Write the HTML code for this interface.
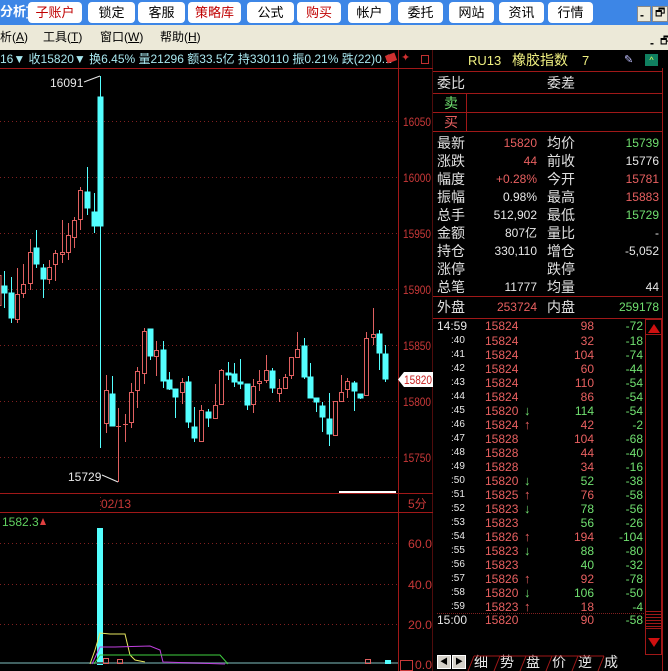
<!DOCTYPE html>
<html><head><meta charset="utf-8"><style>
*{margin:0;padding:0;box-sizing:border-box}
body{width:668px;height:671px;overflow:hidden;background:#000;position:relative;font-family:"Liberation Sans","Noto Sans CJK SC",sans-serif;font-size:12px}
.a{position:absolute;white-space:nowrap;line-height:1}
#top{position:absolute;left:0;top:0;width:668px;height:25px;background:#3d86e6}
.btn{position:absolute;top:2px;height:21px;background:#fff;border-radius:4px;font-size:13px;line-height:21px;text-align:center;color:#000}
.btn.r{color:#c00000}
#menu{position:absolute;left:0;top:25px;width:668px;height:25px;background:#ece9d8;font-size:12px}
.L{color:#e0e0e0;font-size:14px}
.R{color:#e86060}
.G{color:#70e070}
.W{color:#e8e8e8}
.hl{position:absolute;height:1px;background:#a01818}
.vl{position:absolute;width:1px;background:#a01818}
</style></head><body>
<div id="top">
<div class="a" style="left:0;top:5px;color:#fff;font-size:13px;font-weight:bold">分析]</div>
<div class="btn r" style="left:28px;width:54px">子账户</div>
<div class="btn" style="left:88px;width:47px">锁定</div>
<div class="btn" style="left:138px;width:47px">客服</div>
<div class="btn r" style="left:188px;width:53px">策略库</div>
<div class="btn" style="left:247px;width:47px">公式</div>
<div class="btn r" style="left:297px;width:44px">购买</div>
<div class="btn" style="left:348px;width:43px">帐户</div>
<div class="btn" style="left:398px;width:45px">委托</div>
<div class="btn" style="left:449px;width:45px">网站</div>
<div class="btn" style="left:499px;width:45px">资讯</div>
<div class="btn" style="left:548px;width:45px">行情</div>
<div style="position:absolute;left:637px;top:6px;width:14px;height:16px;background:#ece9d8;border:1px solid #888"></div>
<div style="position:absolute;left:652px;top:6px;width:16px;height:16px;background:#ece9d8;border:1px solid #888"></div>
<div class="a" style="left:640px;top:9px;font-weight:bold">-</div>
<div class="a" style="left:655px;top:8px;font-size:11px">🗗</div>
</div>
<div id="menu">
<div class="a" style="left:0;top:6px">析(<u>A</u>)</div>
<div class="a" style="left:43px;top:6px">工具(<u>T</u>)</div>
<div class="a" style="left:100px;top:6px">窗口(<u>W</u>)</div>
<div class="a" style="left:160px;top:6px">帮助(<u>H</u>)</div>
<div class="a" style="left:650px;top:12px;font-weight:bold">-</div>
<div class="a" style="left:660px;top:11px;font-size:11px">🗗</div>
</div>
<div class="a" style="left:0;top:53px;color:#a8e8f0;font-size:12px">16▼ 收15820▼ 换6.45% 量21296 额33.5亿 持330110 振0.21% 跌(22)0.1</div>
<div style="position:absolute;left:386px;top:54px;width:10px;height:8px;background:#d03030;transform:rotate(-20deg)"></div>
<div class="a" style="left:401px;top:53px;color:#d03030;font-size:11px">✦</div>
<div style="position:absolute;left:421px;top:55px;width:8px;height:9px;border:1px solid #c03030"></div>

<svg style="position:absolute;left:0;top:0" width="433" height="671">
<g stroke="#a01818" stroke-width="1">
<line x1="398.5" y1="50" x2="398.5" y2="671"/>
<line x1="433" y1="50" x2="433" y2="671"/>
<line x1="0" y1="68.5" x2="433" y2="68.5"/>
<line x1="0" y1="493.5" x2="433" y2="493.5"/>
<line x1="0" y1="512.5" x2="433" y2="512.5"/>
</g>
<g stroke="#802020" stroke-dasharray="1,3">
<line x1="0" y1="121.5" x2="398" y2="121.5"/><line x1="0" y1="177.5" x2="398" y2="177.5"/>
<line x1="0" y1="233.5" x2="398" y2="233.5"/><line x1="0" y1="289.5" x2="398" y2="289.5"/>
<line x1="0" y1="345.5" x2="398" y2="345.5"/><line x1="0" y1="401.5" x2="398" y2="401.5"/>
<line x1="0" y1="457.5" x2="398" y2="457.5"/>
<line x1="0" y1="543.5" x2="398" y2="543.5"/><line x1="0" y1="584.5" x2="398" y2="584.5"/>
<line x1="0" y1="624.5" x2="398" y2="624.5"/>
<line x1="100.5" y1="493" x2="100.5" y2="512"/>
</g>
<g fill="#c83838" font-size="12" font-family="Liberation Sans" lengthAdjust="spacingAndGlyphs">
<text x="403" y="126" textLength="28" lengthAdjust="spacingAndGlyphs">16050</text><text x="403" y="182" textLength="28" lengthAdjust="spacingAndGlyphs">16000</text><text x="403" y="238" textLength="28" lengthAdjust="spacingAndGlyphs">15950</text>
<text x="403" y="294" textLength="28" lengthAdjust="spacingAndGlyphs">15900</text><text x="403" y="350" textLength="28" lengthAdjust="spacingAndGlyphs">15850</text><text x="403" y="406" textLength="28" lengthAdjust="spacingAndGlyphs">15800</text>
<text x="403" y="462" textLength="28" lengthAdjust="spacingAndGlyphs">15750</text>
<text x="408" y="508">5分</text>
<text x="408" y="548" textLength="24" lengthAdjust="spacingAndGlyphs">60.0</text><text x="408" y="589" textLength="24" lengthAdjust="spacingAndGlyphs">40.0</text><text x="408" y="629" textLength="24" lengthAdjust="spacingAndGlyphs">20.0</text>
<text x="415" y="669" textLength="17" lengthAdjust="spacingAndGlyphs">0.0</text>
<text x="101" y="508">02/13</text>
</g>
<rect x="400.5" y="660.5" width="12" height="10" fill="none" stroke="#c83838"/>
<path d="M398 379.5 L404 372 H433 V387 H404 Z" fill="#fff"/>
<text x="404" y="384" fill="#c82020" font-size="12" font-family="Liberation Sans" textLength="28" lengthAdjust="spacingAndGlyphs">15820</text>
<rect x="339" y="491" width="57" height="2" fill="#fff"/>
<g font-size="12" font-family="Liberation Sans" fill="#e8e8e8">
<text x="50" y="87">16091</text><text x="68" y="481">15729</text>
</g>
<g stroke="#e8e8e8"><line x1="84" y1="82" x2="100" y2="76"/><line x1="102" y1="475" x2="118" y2="482"/></g>
<text x="2" y="526" fill="#60d060" font-size="12" font-family="Liberation Sans">1582.3</text>
<path d="M40 525 L43 518 L46 525 Z" fill="#e04040"/>
<g stroke="#54ffff" fill="#54ffff">
<line x1="4.5" y1="271" x2="4.5" y2="308"/><rect x="2" y="286" width="5" height="7"/>
<line x1="11.5" y1="277" x2="11.5" y2="323"/><rect x="9" y="293" width="5" height="25"/>
<line x1="36.5" y1="230" x2="36.5" y2="268"/><rect x="34" y="248" width="5" height="16"/>
<line x1="43.5" y1="264" x2="43.5" y2="298"/><rect x="41" y="268" width="5" height="11"/>
<line x1="87.5" y1="167" x2="87.5" y2="215"/><rect x="85" y="192" width="5" height="16"/>
<line x1="94.5" y1="193" x2="94.5" y2="233"/><rect x="92" y="212" width="5" height="14"/>
<line x1="100.5" y1="76" x2="100.5" y2="448"/><rect x="98" y="97" width="5" height="129"/>
<line x1="112.5" y1="376" x2="112.5" y2="426"/><rect x="110" y="394" width="5" height="32"/>
<line x1="150.5" y1="329" x2="150.5" y2="360"/><rect x="148" y="329" width="5" height="27"/>
<line x1="163.5" y1="341" x2="163.5" y2="388"/><rect x="161" y="350" width="5" height="31"/>
<line x1="169.5" y1="372" x2="169.5" y2="390"/><rect x="167" y="380" width="5" height="9"/>
<line x1="175.5" y1="389" x2="175.5" y2="418"/><rect x="173" y="389" width="5" height="8"/>
<line x1="188.5" y1="376" x2="188.5" y2="428"/><rect x="186" y="382" width="5" height="40"/>
<line x1="194.5" y1="407" x2="194.5" y2="442"/><rect x="192" y="427" width="5" height="11"/>
<line x1="208.5" y1="409" x2="208.5" y2="427"/><rect x="206" y="412" width="5" height="6"/>
<line x1="228.5" y1="362" x2="228.5" y2="380"/><rect x="226" y="373" width="5" height="2"/>
<line x1="234.5" y1="363" x2="234.5" y2="387"/><rect x="232" y="374" width="5" height="8"/>
<line x1="240.5" y1="359" x2="240.5" y2="389"/><rect x="238" y="382" width="5" height="2"/>
<line x1="247.5" y1="384" x2="247.5" y2="410"/><rect x="245" y="384" width="5" height="21"/>
<line x1="272.5" y1="368" x2="272.5" y2="393"/><rect x="270" y="371" width="5" height="17"/>
<line x1="304.5" y1="338" x2="304.5" y2="379"/><rect x="302" y="346" width="5" height="31"/>
<line x1="310.5" y1="363" x2="310.5" y2="398"/><rect x="308" y="377" width="5" height="21"/>
<line x1="316.5" y1="398" x2="316.5" y2="412"/><rect x="314" y="398" width="5" height="4"/>
<line x1="322.5" y1="402" x2="322.5" y2="432"/><rect x="320" y="406" width="5" height="11"/>
<line x1="329.5" y1="393" x2="329.5" y2="446"/><rect x="327" y="419" width="5" height="15"/>
<line x1="354.5" y1="381" x2="354.5" y2="411"/><rect x="352" y="383" width="5" height="8"/>
<line x1="360.5" y1="394" x2="360.5" y2="399"/><rect x="358" y="394" width="5" height="4"/>
<line x1="379.5" y1="330" x2="379.5" y2="370"/><rect x="377" y="334" width="5" height="19"/>
<line x1="385.5" y1="345" x2="385.5" y2="382"/><rect x="383" y="354" width="5" height="25"/>
</g>
<g stroke="#e06060" fill="#000">
<line x1="17.5" y1="268" x2="17.5" y2="323"/><rect x="15.5" y="294.5" width="4" height="25"/>
<line x1="23.5" y1="264" x2="23.5" y2="298"/><rect x="21.5" y="284.5" width="4" height="9"/>
<line x1="30.5" y1="239" x2="30.5" y2="290"/><rect x="28.5" y="252.5" width="4" height="31"/>
<line x1="49.5" y1="260" x2="49.5" y2="284"/><rect x="47.5" y="267.5" width="4" height="12"/>
<line x1="55.5" y1="250" x2="55.5" y2="281"/><rect x="53.5" y="253.5" width="4" height="11"/>
<line x1="62.5" y1="220" x2="62.5" y2="263"/><rect x="60.5" y="252.5" width="4" height="2"/>
<line x1="68.5" y1="223" x2="68.5" y2="260"/><rect x="66.5" y="235.5" width="4" height="17"/>
<line x1="74.5" y1="217" x2="74.5" y2="248"/><rect x="72.5" y="220.5" width="4" height="17"/>
<line x1="80.5" y1="187" x2="80.5" y2="230"/><rect x="78.5" y="190.5" width="4" height="29"/>
<line x1="106.5" y1="375" x2="106.5" y2="433"/><rect x="104.5" y="390.5" width="4" height="33"/>
<line x1="118.5" y1="408" x2="118.5" y2="482"/><line x1="116" y1="426.5" x2="121" y2="426.5"/>
<line x1="125.5" y1="414" x2="125.5" y2="442"/><line x1="123" y1="424.5" x2="128" y2="424.5"/>
<line x1="131.5" y1="383" x2="131.5" y2="428"/><rect x="129.5" y="392.5" width="4" height="30"/>
<line x1="137.5" y1="367" x2="137.5" y2="408"/><rect x="135.5" y="371.5" width="4" height="19"/>
<line x1="144.5" y1="328" x2="144.5" y2="384"/><rect x="142.5" y="331.5" width="4" height="42"/>
<line x1="156.5" y1="341" x2="156.5" y2="376"/><rect x="154.5" y="350.5" width="4" height="6"/>
<line x1="182.5" y1="378" x2="182.5" y2="404"/><rect x="180.5" y="382.5" width="4" height="10"/>
<line x1="201.5" y1="405" x2="201.5" y2="441"/><rect x="199.5" y="410.5" width="4" height="31"/>
<line x1="215.5" y1="384" x2="215.5" y2="418"/><rect x="213.5" y="405.5" width="4" height="13"/>
<line x1="221.5" y1="369" x2="221.5" y2="404"/><rect x="219.5" y="370.5" width="4" height="34"/>
<line x1="253.5" y1="379" x2="253.5" y2="413"/><rect x="251.5" y="386.5" width="4" height="18"/>
<line x1="259.5" y1="370" x2="259.5" y2="391"/><rect x="257.5" y="381.5" width="4" height="2"/>
<line x1="266.5" y1="355" x2="266.5" y2="383"/><rect x="264.5" y="370.5" width="4" height="10"/>
<line x1="279.5" y1="379" x2="279.5" y2="402"/><rect x="277.5" y="388.5" width="4" height="5"/>
<line x1="285.5" y1="374" x2="285.5" y2="388"/><rect x="283.5" y="377.5" width="4" height="11"/>
<line x1="291.5" y1="357" x2="291.5" y2="379"/><rect x="289.5" y="357.5" width="4" height="18"/>
<line x1="297.5" y1="332" x2="297.5" y2="357"/><rect x="295.5" y="349.5" width="4" height="8"/>
<line x1="335.5" y1="401" x2="335.5" y2="435"/><rect x="333.5" y="401.5" width="4" height="34"/>
<line x1="341.5" y1="375" x2="341.5" y2="402"/><rect x="339.5" y="392.5" width="4" height="9"/>
<line x1="347.5" y1="378" x2="347.5" y2="398"/><rect x="345.5" y="381.5" width="4" height="8"/>
<line x1="366.5" y1="332" x2="366.5" y2="396"/><rect x="364.5" y="338.5" width="4" height="57"/>
<line x1="373.5" y1="308" x2="373.5" y2="345"/><rect x="371.5" y="334.5" width="4" height="3"/>
<rect x="-2" y="275.5" width="3" height="30"/>
</g>
<rect x="97" y="528" width="6" height="137" fill="#54ffff"/>
<rect x="0" y="662" width="398" height="2" fill="#406060"/>
<g fill="none" stroke-width="1">
<polyline stroke="#e8e860" points="90,664 95,650 100,633 110,634 125,634 130,655 135,660 145,662"/>
<polyline stroke="#c040e0" points="92,664 100,647 115,647 150,646 160,650 163,662 225,664"/>
<polyline stroke="#40d040" points="94,664 100,655 220,655 228,664"/>
</g>
<g fill="none" stroke="#e06060"><rect x="103.5" y="658.5" width="5" height="5"/><rect x="117.5" y="659.5" width="5" height="4"/><rect x="365.5" y="659.5" width="5" height="4"/></g>
<rect x="385" y="660" width="6" height="4" fill="#54ffff"/>
</svg>

<div class="vl" style="left:662px;top:68px;height:603px"></div>
<div class="a" style="left:468px;top:54px;color:#f0f080;font-size:13px">RU13</div>
<div class="a" style="left:512px;top:53px;color:#f0f080;font-size:14px">橡胶指数</div>
<div class="a" style="left:582px;top:54px;color:#f0f080;font-size:13px">7</div>
<div class="a" style="left:624px;top:55px;color:#c0c0ff;font-size:11px">✎</div>
<div style="position:absolute;left:645px;top:54px;width:13px;height:12px;background:#108060;color:#e0ff60;font-size:9px;text-align:center;line-height:12px">^</div>
<div class="hl" style="left:433px;top:71px;width:230px"></div>
<div class="hl" style="left:433px;top:93px;width:230px"></div>
<div class="hl" style="left:433px;top:112px;width:230px"></div>
<div class="hl" style="left:433px;top:131px;width:230px"></div>
<div class="vl" style="left:466px;top:93px;height:38px"></div>
<div class="hl" style="left:433px;top:296px;width:230px"></div>
<div class="hl" style="left:433px;top:318px;width:230px"></div>
<div class="a L" style="left:437px;top:76px">委比</div>
<div class="a L" style="left:547px;top:76px">委差</div>
<div class="a G" style="left:444px;top:96px;font-size:14px">卖</div>
<div class="a R" style="left:444px;top:115px;font-size:14px">买</div>

<div class="a L" style="left:437px;top:136px">最新</div><div class="a R" style="right:131px;top:137px">15820</div><div class="a L" style="left:547px;top:136px">均价</div><div class="a G" style="right:9px;top:137px">15739</div>
<div class="a L" style="left:437px;top:154px">涨跌</div><div class="a R" style="right:131px;top:155px">44</div><div class="a L" style="left:547px;top:154px">前收</div><div class="a W" style="right:9px;top:155px">15776</div>
<div class="a L" style="left:437px;top:172px">幅度</div><div class="a R" style="right:131px;top:173px">+0.28%</div><div class="a L" style="left:547px;top:172px">今开</div><div class="a R" style="right:9px;top:173px">15781</div>
<div class="a L" style="left:437px;top:190px">振幅</div><div class="a W" style="right:131px;top:191px">0.98%</div><div class="a L" style="left:547px;top:190px">最高</div><div class="a R" style="right:9px;top:191px">15883</div>
<div class="a L" style="left:437px;top:208px">总手</div><div class="a W" style="right:131px;top:209px">512,902</div><div class="a L" style="left:547px;top:208px">最低</div><div class="a G" style="right:9px;top:209px">15729</div>
<div class="a L" style="left:437px;top:226px">金额</div><div class="a W" style="right:131px;top:227px">807亿</div><div class="a L" style="left:547px;top:226px">量比</div><div class="a W" style="right:9px;top:227px">-</div>
<div class="a L" style="left:437px;top:244px">持仓</div><div class="a W" style="right:131px;top:245px">330,110</div><div class="a L" style="left:547px;top:244px">增仓</div><div class="a W" style="right:9px;top:245px">-5,052</div>
<div class="a L" style="left:437px;top:262px">涨停</div><div class="a L" style="left:547px;top:262px">跌停</div>
<div class="a L" style="left:437px;top:280px">总笔</div><div class="a W" style="right:131px;top:281px">11777</div><div class="a L" style="left:547px;top:280px">均量</div><div class="a W" style="right:9px;top:281px">44</div>
<div class="a L" style="left:437px;top:300px">外盘</div><div class="a R" style="right:131px;top:301px">253724</div><div class="a L" style="left:547px;top:300px">内盘</div><div class="a G" style="right:9px;top:301px">259178</div>

<div id="ticks" style="position:absolute;left:433px;top:320px;width:212px;height:300px;font-size:12px">
<div class="a W" style="left:4px;top:0">14:59</div><div class="a R" style="left:52px;top:0">15824</div><div class="a R" style="right:51px;top:0">98</div><div class="a G" style="right:2px;top:0">-72</div>
</div>
<div style="position:absolute;left:437px;top:613px;width:207px;border-top:1px dotted #802020"></div>
<div class="a W" style="left:437px;top:614px">15:00</div><div class="a R" style="left:485px;top:614px">15820</div><div class="a R" style="left:560px;top:614px;width:34px;text-align:right">90</div><div class="a G" style="left:610px;top:614px;width:33px;text-align:right">-58</div>

<div style="position:absolute;left:433px;top:334px;width:212px;font-size:11px;line-height:14px">
<div style="position:relative;height:14px"><span class="a W" style="left:18px;top:2px;font-size:10px">:40</span><span class="a R" style="left:52px;top:1px;font-size:12px">15824</span><span class="a R" style="left:127px;top:1px;width:34px;text-align:right;font-size:12px">32</span><span class="a G" style="left:177px;top:1px;width:33px;text-align:right;font-size:12px">-18</span></div>
<div style="position:relative;height:14px"><span class="a W" style="left:18px;top:2px;font-size:10px">:41</span><span class="a R" style="left:52px;top:1px;font-size:12px">15824</span><span class="a R" style="left:127px;top:1px;width:34px;text-align:right;font-size:12px">104</span><span class="a G" style="left:177px;top:1px;width:33px;text-align:right;font-size:12px">-74</span></div>
<div style="position:relative;height:14px"><span class="a W" style="left:18px;top:2px;font-size:10px">:42</span><span class="a R" style="left:52px;top:1px;font-size:12px">15824</span><span class="a R" style="left:127px;top:1px;width:34px;text-align:right;font-size:12px">60</span><span class="a G" style="left:177px;top:1px;width:33px;text-align:right;font-size:12px">-44</span></div>
<div style="position:relative;height:14px"><span class="a W" style="left:18px;top:2px;font-size:10px">:43</span><span class="a R" style="left:52px;top:1px;font-size:12px">15824</span><span class="a R" style="left:127px;top:1px;width:34px;text-align:right;font-size:12px">110</span><span class="a G" style="left:177px;top:1px;width:33px;text-align:right;font-size:12px">-54</span></div>
<div style="position:relative;height:14px"><span class="a W" style="left:18px;top:2px;font-size:10px">:44</span><span class="a R" style="left:52px;top:1px;font-size:12px">15824</span><span class="a R" style="left:127px;top:1px;width:34px;text-align:right;font-size:12px">86</span><span class="a G" style="left:177px;top:1px;width:33px;text-align:right;font-size:12px">-54</span></div>
<div style="position:relative;height:14px"><span class="a W" style="left:18px;top:2px;font-size:10px">:45</span><span class="a R" style="left:52px;top:1px;font-size:12px">15820</span><span class="a G" style="left:91px;top:0;font-size:13px">↓</span><span class="a G" style="left:127px;top:1px;width:34px;text-align:right;font-size:12px">114</span><span class="a G" style="left:177px;top:1px;width:33px;text-align:right;font-size:12px">-54</span></div>
<div style="position:relative;height:14px"><span class="a W" style="left:18px;top:2px;font-size:10px">:46</span><span class="a R" style="left:52px;top:1px;font-size:12px">15824</span><span class="a R" style="left:91px;top:0;font-size:13px">↑</span><span class="a R" style="left:127px;top:1px;width:34px;text-align:right;font-size:12px">42</span><span class="a G" style="left:177px;top:1px;width:33px;text-align:right;font-size:12px">-2</span></div>
<div style="position:relative;height:14px"><span class="a W" style="left:18px;top:2px;font-size:10px">:47</span><span class="a R" style="left:52px;top:1px;font-size:12px">15828</span><span class="a R" style="left:127px;top:1px;width:34px;text-align:right;font-size:12px">104</span><span class="a G" style="left:177px;top:1px;width:33px;text-align:right;font-size:12px">-68</span></div>
<div style="position:relative;height:14px"><span class="a W" style="left:18px;top:2px;font-size:10px">:48</span><span class="a R" style="left:52px;top:1px;font-size:12px">15828</span><span class="a R" style="left:127px;top:1px;width:34px;text-align:right;font-size:12px">44</span><span class="a G" style="left:177px;top:1px;width:33px;text-align:right;font-size:12px">-40</span></div>
<div style="position:relative;height:14px"><span class="a W" style="left:18px;top:2px;font-size:10px">:49</span><span class="a R" style="left:52px;top:1px;font-size:12px">15828</span><span class="a R" style="left:127px;top:1px;width:34px;text-align:right;font-size:12px">34</span><span class="a G" style="left:177px;top:1px;width:33px;text-align:right;font-size:12px">-16</span></div>
<div style="position:relative;height:14px"><span class="a W" style="left:18px;top:2px;font-size:10px">:50</span><span class="a R" style="left:52px;top:1px;font-size:12px">15820</span><span class="a G" style="left:91px;top:0;font-size:13px">↓</span><span class="a G" style="left:127px;top:1px;width:34px;text-align:right;font-size:12px">52</span><span class="a G" style="left:177px;top:1px;width:33px;text-align:right;font-size:12px">-38</span></div>
<div style="position:relative;height:14px"><span class="a W" style="left:18px;top:2px;font-size:10px">:51</span><span class="a R" style="left:52px;top:1px;font-size:12px">15825</span><span class="a R" style="left:91px;top:0;font-size:13px">↑</span><span class="a R" style="left:127px;top:1px;width:34px;text-align:right;font-size:12px">76</span><span class="a G" style="left:177px;top:1px;width:33px;text-align:right;font-size:12px">-58</span></div>
<div style="position:relative;height:14px"><span class="a W" style="left:18px;top:2px;font-size:10px">:52</span><span class="a R" style="left:52px;top:1px;font-size:12px">15823</span><span class="a G" style="left:91px;top:0;font-size:13px">↓</span><span class="a G" style="left:127px;top:1px;width:34px;text-align:right;font-size:12px">78</span><span class="a G" style="left:177px;top:1px;width:33px;text-align:right;font-size:12px">-56</span></div>
<div style="position:relative;height:14px"><span class="a W" style="left:18px;top:2px;font-size:10px">:53</span><span class="a R" style="left:52px;top:1px;font-size:12px">15823</span><span class="a G" style="left:127px;top:1px;width:34px;text-align:right;font-size:12px">56</span><span class="a G" style="left:177px;top:1px;width:33px;text-align:right;font-size:12px">-26</span></div>
<div style="position:relative;height:14px"><span class="a W" style="left:18px;top:2px;font-size:10px">:54</span><span class="a R" style="left:52px;top:1px;font-size:12px">15826</span><span class="a R" style="left:91px;top:0;font-size:13px">↑</span><span class="a R" style="left:127px;top:1px;width:34px;text-align:right;font-size:12px">194</span><span class="a G" style="left:177px;top:1px;width:33px;text-align:right;font-size:12px">-104</span></div>
<div style="position:relative;height:14px"><span class="a W" style="left:18px;top:2px;font-size:10px">:55</span><span class="a R" style="left:52px;top:1px;font-size:12px">15823</span><span class="a G" style="left:91px;top:0;font-size:13px">↓</span><span class="a G" style="left:127px;top:1px;width:34px;text-align:right;font-size:12px">88</span><span class="a G" style="left:177px;top:1px;width:33px;text-align:right;font-size:12px">-80</span></div>
<div style="position:relative;height:14px"><span class="a W" style="left:18px;top:2px;font-size:10px">:56</span><span class="a R" style="left:52px;top:1px;font-size:12px">15823</span><span class="a G" style="left:127px;top:1px;width:34px;text-align:right;font-size:12px">40</span><span class="a G" style="left:177px;top:1px;width:33px;text-align:right;font-size:12px">-32</span></div>
<div style="position:relative;height:14px"><span class="a W" style="left:18px;top:2px;font-size:10px">:57</span><span class="a R" style="left:52px;top:1px;font-size:12px">15826</span><span class="a R" style="left:91px;top:0;font-size:13px">↑</span><span class="a R" style="left:127px;top:1px;width:34px;text-align:right;font-size:12px">92</span><span class="a G" style="left:177px;top:1px;width:33px;text-align:right;font-size:12px">-78</span></div>
<div style="position:relative;height:14px"><span class="a W" style="left:18px;top:2px;font-size:10px">:58</span><span class="a R" style="left:52px;top:1px;font-size:12px">15820</span><span class="a G" style="left:91px;top:0;font-size:13px">↓</span><span class="a G" style="left:127px;top:1px;width:34px;text-align:right;font-size:12px">106</span><span class="a G" style="left:177px;top:1px;width:33px;text-align:right;font-size:12px">-50</span></div>
<div style="position:relative;height:14px"><span class="a W" style="left:18px;top:2px;font-size:10px">:59</span><span class="a R" style="left:52px;top:1px;font-size:12px">15823</span><span class="a R" style="left:91px;top:0;font-size:13px">↑</span><span class="a R" style="left:127px;top:1px;width:34px;text-align:right;font-size:12px">18</span><span class="a G" style="left:177px;top:1px;width:33px;text-align:right;font-size:12px">-4</span></div>
</div>

<div style="position:absolute;left:645px;top:319px;width:17px;height:336px;border:1px solid #a01818"></div>
<div style="position:absolute;left:645px;top:319px;width:17px;height:16px;border:1px solid #a01818"></div>
<div style="position:absolute;left:648px;top:324px;width:0;height:0;border-left:6px solid transparent;border-right:6px solid transparent;border-bottom:9px solid #d01010"></div>
<div style="position:absolute;left:645px;top:611px;width:17px;height:18px;border:1px solid #a01818;background:repeating-linear-gradient(#000 0 2px,#a01818 2px 3px)"></div>
<div style="position:absolute;left:645px;top:628px;width:17px;height:27px;background:#000;border:1px solid #a01818"></div>
<div style="position:absolute;left:648px;top:638px;width:0;height:0;border-left:6px solid transparent;border-right:6px solid transparent;border-top:9px solid #d01010"></div>
<div style="position:absolute;left:437px;top:655px;width:14px;height:14px;background:#d4d0c8;border:1px solid #fff;font-size:8px;text-align:center;line-height:12px">◀</div>
<div style="position:absolute;left:452px;top:655px;width:14px;height:14px;background:#d4d0c8;border:1px solid #fff;font-size:8px;text-align:center;line-height:12px">▶</div>
<div class="a W" style="left:474px;top:655px;font-size:14px">细</div>
<div class="a W" style="left:500px;top:655px;font-size:14px">势</div>
<div class="a W" style="left:526px;top:655px;font-size:14px">盘</div>
<div class="a W" style="left:552px;top:655px;font-size:14px">价</div>
<div class="a W" style="left:578px;top:655px;font-size:14px">逆</div>
<div class="a W" style="left:604px;top:655px;font-size:14px">成</div>
<svg style="position:absolute;left:466px;top:654px" width="160" height="17"><g stroke="#a01818" fill="none"><path d="M2 17 L8 2 M28 17 L34 2 M54 17 L60 2 M80 17 L86 2 M106 17 L112 2 M132 17 L138 2 M8 2 H138"/></g></svg>
</body></html>
